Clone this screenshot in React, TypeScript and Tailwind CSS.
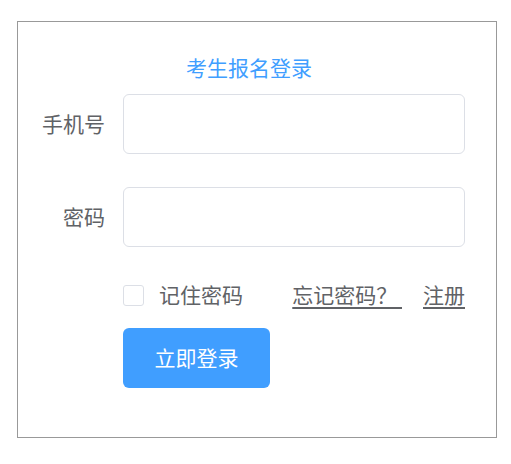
import React from "react";

export default function App() {
  const font = { fontFamily: '"Noto Sans CJK SC", "Noto Sans", sans-serif' };
  return (
    <div className="w-[511px] h-[464px] bg-white pl-[17px] pt-[21px]" style={font}>
      <div className="w-[480px] h-[417px] border border-[#999999] flex flex-col">
        <div className="pl-[168px] pt-[31px] h-[28px] box-content text-[21px] leading-[28px] text-[#409eff] whitespace-nowrap">
          考生报名登录
        </div>
        <div className="mt-[13px] flex items-center h-[60px]">
          <div className="w-[105px] pr-[18px] text-right text-[21px] text-[#606266] whitespace-nowrap">手机号</div>
          <div className="w-[342px] h-[60px] border border-[#dcdfe6] rounded-[6px] bg-white" />
        </div>
        <div className="mt-[33px] flex items-center h-[60px]">
          <div className="w-[105px] pr-[18px] text-right text-[21px] text-[#606266] whitespace-nowrap">密码</div>
          <div className="w-[342px] h-[60px] border border-[#dcdfe6] rounded-[6px] bg-white" />
        </div>
        <div className="mt-[26px] flex items-center h-[44px] pl-[105px]">
          <div className="w-[342px] flex items-center">
            <div className="w-[21px] h-[21px] border border-[#dcdfe6] rounded-[3px] bg-white" />
            <span className="ml-[15px] text-[21px] text-[#606266] whitespace-nowrap">记住密码</span>
            <div className="ml-auto flex items-center text-[21px] text-[#606266] whitespace-nowrap">
              <span className="underline underline-offset-[4px] whitespace-pre">忘记密码？ </span>
              <span className="ml-[21px] underline underline-offset-[4px]">注册</span>
            </div>
          </div>
        </div>
        <div className="mt-[11px] pl-[105px]">
          <div className="w-[147px] h-[60px] bg-[#409eff] rounded-[6px] flex items-center justify-center text-white text-[21px]">
            立即登录
          </div>
        </div>
      </div>
    </div>
  );
}
